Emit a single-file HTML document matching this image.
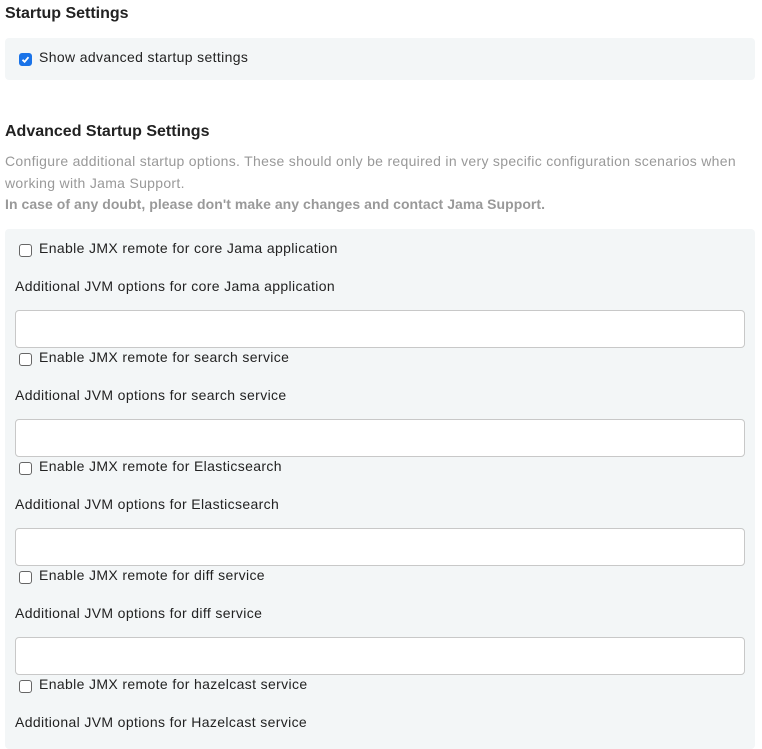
<!DOCTYPE html>
<html><head><style>
body{margin:0;background:#fff;font-family:"Liberation Sans",Arial,sans-serif;color:#222;width:762px;height:739px;overflow:hidden;position:relative}
h{position:absolute;font-size:16px;font-weight:bold;color:#222}
.box{position:absolute;left:5px;width:750px;background:#f3f6f7;border-radius:4px}
.cb{position:absolute;width:11px;height:11px;border:1px solid #666;border-radius:3px;background:#fff}
.t{position:absolute;font-size:14px;white-space:nowrap;line-height:16px;letter-spacing:0.36px}
.in{position:absolute;left:15px;width:728px;height:36px;border:1px solid #c8c8c8;border-radius:4px;background:#fff}
.g{position:absolute;left:5px;font-size:14px;color:#999;line-height:21.5px;letter-spacing:0.3px;white-space:nowrap}
.g b{letter-spacing:0.05px}
</style></head><body>
<h style="left:5px;top:5px">Startup Settings</h>
<div class="box" style="top:38px;height:42px"></div>
<div class="cb" style="left:19px;top:53px;background:#1a73e8;border-color:#1a73e8"><svg width="11" height="11" viewBox="0 0 11 11" style="position:absolute;left:0;top:0"><path d="M2.5 5.8L4.6 7.8L8.5 3.2" stroke="#fff" stroke-width="1.8" fill="none"/></svg></div>
<div class="t" style="left:39px;top:49px">Show advanced startup settings</div>
<h style="left:5px;top:123px">Advanced Startup Settings</h>
<div class="g" style="top:151px">Configure additional startup options. These should only be required in very specific configuration scenarios when<br>working with Jama Support.<br><b>In case of any doubt, please don't make any changes and contact Jama Support.</b></div>
<div class="box" style="top:229px;height:520px"></div>
<div class="cb" style="left:19px;top:244px"></div><div class="t" style="left:39px;top:240px">Enable JMX remote for core Jama application</div>
<div class="t" style="left:15px;top:278px">Additional JVM options for core Jama application</div>
<div class="in" style="top:310px"></div>
<div class="cb" style="left:19px;top:353px"></div><div class="t" style="left:39px;top:349px">Enable JMX remote for search service</div>
<div class="t" style="left:15px;top:387px">Additional JVM options for search service</div>
<div class="in" style="top:419px"></div>
<div class="cb" style="left:19px;top:462px"></div><div class="t" style="left:39px;top:458px">Enable JMX remote for Elasticsearch</div>
<div class="t" style="left:15px;top:496px">Additional JVM options for Elasticsearch</div>
<div class="in" style="top:528px"></div>
<div class="cb" style="left:19px;top:571px"></div><div class="t" style="left:39px;top:567px">Enable JMX remote for diff service</div>
<div class="t" style="left:15px;top:605px">Additional JVM options for diff service</div>
<div class="in" style="top:637px"></div>
<div class="cb" style="left:19px;top:680px"></div><div class="t" style="left:39px;top:676px">Enable JMX remote for hazelcast service</div>
<div class="t" style="left:15px;top:714px">Additional JVM options for Hazelcast service</div>
</body></html>
